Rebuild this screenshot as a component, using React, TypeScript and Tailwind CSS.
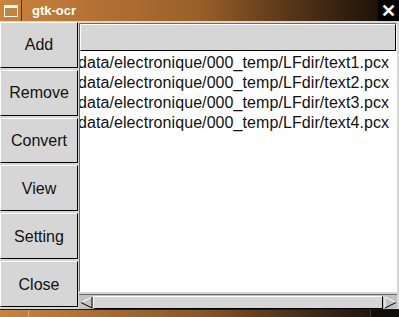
import React from 'react';

const buttons = ['Add', 'Remove', 'Convert', 'View', 'Setting', 'Close'];
const files = [1, 2, 3, 4].map((n) => `data/electronique/000_temp/LFdir/text${n}.pcx`);

function SideButton({ label }: { label: string }) {
  return (
    <div className="h-[48px] pr-[1px] pb-[2px]">
      <button className="flex h-full w-full items-center justify-center border border-t-white border-l-white border-b-black border-r-black bg-[#d6d6d6] pt-[1px] text-[16px] text-[#111]">
        {label}
      </button>
    </div>
  );
}

function ArrowLeft() {
  return (
    <svg width="13" height="13" viewBox="0 0 13 13">
      <path d="M1 6.5 L12 1" stroke="#fff" strokeWidth="1" fill="none" />
      <path d="M1 6.5 L12 12 L12 1" stroke="#000" strokeWidth="1" fill="none" />
    </svg>
  );
}

function ArrowRight() {
  return (
    <svg width="13" height="13" viewBox="0 0 13 13">
      <path d="M1 12 L1 1 L12 6.5" stroke="#fff" strokeWidth="1" fill="none" />
      <path d="M12 6.5 L1 12" stroke="#000" strokeWidth="1" fill="none" />
    </svg>
  );
}

export default function App() {
  return (
    <div className="flex h-[317px] w-[399px] flex-col overflow-hidden bg-[#d6d6d6] font-['Liberation_Sans',Arial,sans-serif]">
      <div className="flex h-[21px] items-center bg-gradient-to-r from-[#c9843e] via-[#9a5f2a] to-[#120b05]">
        <div className="flex h-full w-[22px] items-center justify-center border-r border-[#5a3410]">
          <div className="h-[12px] w-[14px] border border-t-[3px] border-white" />
        </div>
        <span className="ml-[10px] text-[13px] font-bold text-white">gtk-ocr</span>
        <div className="ml-auto flex h-full w-[21px] items-center justify-center bg-black text-[18px] font-bold leading-none text-white">
          ✕
        </div>
      </div>

      <div className="flex h-[288px] border-t border-[#d6d6d6]">
        <div className="flex w-[79px] flex-col">
          {buttons.map((b) => (
            <SideButton key={b} label={b} />
          ))}
        </div>

        <div className="flex flex-1 flex-col pr-[2px] pt-[1px]">
          <div className="flex h-[269px] flex-col border border-t-[#6b6b6b] border-l-[#6b6b6b] border-b-white border-r-white">
            <div className="h-[27px] border border-t-white border-l-white border-b-black border-r-black bg-[#d6d6d6]" />
            <div className="flex-1 overflow-hidden bg-white pt-[1px]">
              {files.map((f) => (
                <div key={f} className="-ml-[2px] h-[20px] whitespace-nowrap text-[16px] leading-[22px] tracking-[0.08px] text-[#111]">
                  {f}
                </div>
              ))}
            </div>
          </div>
          <div className="mt-[2px] flex h-[15px] items-center border-t border-[#6b6b6b] bg-[#c2c2c2]">
            <div className="flex h-[14px] w-[14px] items-center justify-center">
              <ArrowLeft />
            </div>
            <div className="h-[13px] flex-1 border border-t-white border-l-white border-b-black border-r-black bg-[#d6d6d6]" />
            <div className="flex h-[14px] w-[14px] items-center justify-center">
              <ArrowRight />
            </div>
          </div>
        </div>
      </div>

      <div className="flex h-[8px] border-t border-[#2a1a0a] bg-gradient-to-r from-[#c9843e] via-[#8a5626] to-[#140c06]">
        <div className="w-[29px] border-r border-[#e0a868]" />
        <div className="flex-1" />
        <div className="w-[29px] border-l border-[#4a3a2a] bg-[#120a04]" />
      </div>
    </div>
  );
}
